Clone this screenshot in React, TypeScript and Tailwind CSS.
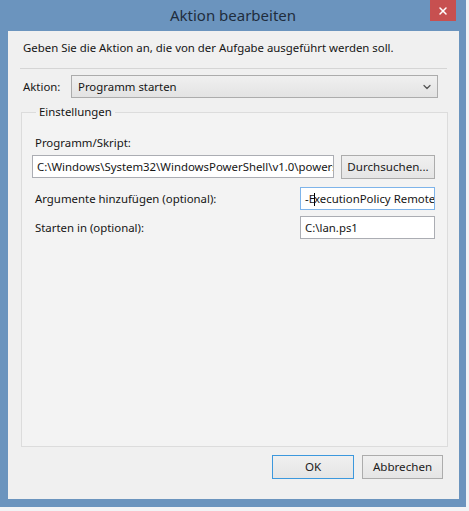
import { ChevronDown, X } from "lucide-react";

const font = { fontFamily: '"Noto Sans", "Open Sans", sans-serif' };

// Textfeld im Stil eines klassischen Windows-Eingabefelds
function Feld({ wert, fokus, caret, className }: { wert: string; fokus?: boolean; caret?: number; className?: string }) {
  const border = fokus ? "border-[#7eb4ea]" : "border-[#abadb3]";
  return (
    <div className={`h-[23px] bg-white border ${border} flex items-center px-[4px] overflow-hidden whitespace-nowrap ${className ?? ""}`}>
      {caret !== undefined ? (
        <span>
          {wert.slice(0, caret)}
          <span className="inline-block w-px h-[13px] bg-black align-middle -mx-px" />
          {wert.slice(caret)}
        </span>
      ) : (
        <span>{wert}</span>
      )}
    </div>
  );
}

function Knopf({ text, standard, className }: { text: string; standard?: boolean; className?: string }) {
  const border = standard ? "border-[#3c98dd]" : "border-[#acacac]";
  return (
    <button className={`h-[24px] border ${border} bg-gradient-to-b from-[#f0f0f0] to-[#e5e5e5] text-[11.6px] text-[#1b1b1b] ${className ?? ""}`}>
      {text}
    </button>
  );
}

export default function App() {
  return (
    <div className="w-[469px] h-[511px] overflow-hidden bg-[#f2f3f5] text-[11.4px] text-[#151515]" style={font}>
      <div className="w-[466px] h-[507px] bg-[#6b94be] flex flex-col">
        {/* Titelleiste */}
        <div className="relative h-[31px] shrink-0 flex items-center justify-center">
          <span className="text-[15px] text-[#1f2d3d] mt-[-1px]">Aktion bearbeiten</span>
          <div className="absolute right-[10px] top-0 w-[26px] h-[21px] bg-[#c75050] flex items-center justify-center">
            <X size={12} strokeWidth={3} color="#ffffff" />
          </div>
        </div>

        {/* Inhalt */}
        <div className="ml-[8px] w-[451px] h-[468px] bg-[#f0f0f0] px-[12px] flex flex-col">
          <p className="mt-[9px] ml-[3px] leading-[16px]">Geben Sie die Aktion an, die von der Aufgabe ausgeführt werden soll.</p>
          <div className="mt-[12px] h-px bg-[#d5d5d5]" />

          <div className="mt-[6px] flex items-center">
            <span className="ml-[3px] w-[48px]">Aktion:</span>
            <div className="w-[367px] h-[23px] border border-[#acacac] bg-gradient-to-b from-[#f0f0f0] to-[#e3e3e3] flex items-center justify-between pl-[6px] pr-[4px]">
              <span>Programm starten</span>
              <ChevronDown size={12} strokeWidth={2.5} color="#555" />
            </div>
          </div>

          <fieldset className="mt-[6px] ml-[1px] w-[427px] h-[343px] border border-[#dcdcdc] bg-[#f3f3f3] px-[10px]">
            <legend className="ml-[4px] px-[3px] leading-[16px]">Einstellungen</legend>

            <p className="mt-[15px] ml-[3px] leading-[16px]">Programm/Skript:</p>
            <div className="mt-[4px] flex">
              <Feld wert="C:\Windows\System32\WindowsPowerShell\v1.0\powershell.exe" className="w-[302px]" />
              <Knopf text="Durchsuchen..." className="ml-[7px] w-[94px]" />
            </div>

            <div className="mt-[8px] flex items-center">
              <span className="ml-[3px] w-[265px]">Argumente hinzufügen (optional):</span>
              <Feld wert="-ExecutionPolicy RemoteSigned" fokus caret={2} className="w-[135px]" />
            </div>

            <div className="mt-[6px] flex items-center">
              <span className="ml-[3px] w-[265px]">Starten in (optional):</span>
              <Feld wert="C:\lan.ps1" className="w-[135px]" />
            </div>
          </fieldset>

          <div className="mt-[8px] flex justify-end pr-[4px]">
            <Knopf text="OK" standard className="w-[82px]" />
            <Knopf text="Abbrechen" className="ml-[8px] w-[81px]" />
          </div>
        </div>
      </div>
    </div>
  );
}
